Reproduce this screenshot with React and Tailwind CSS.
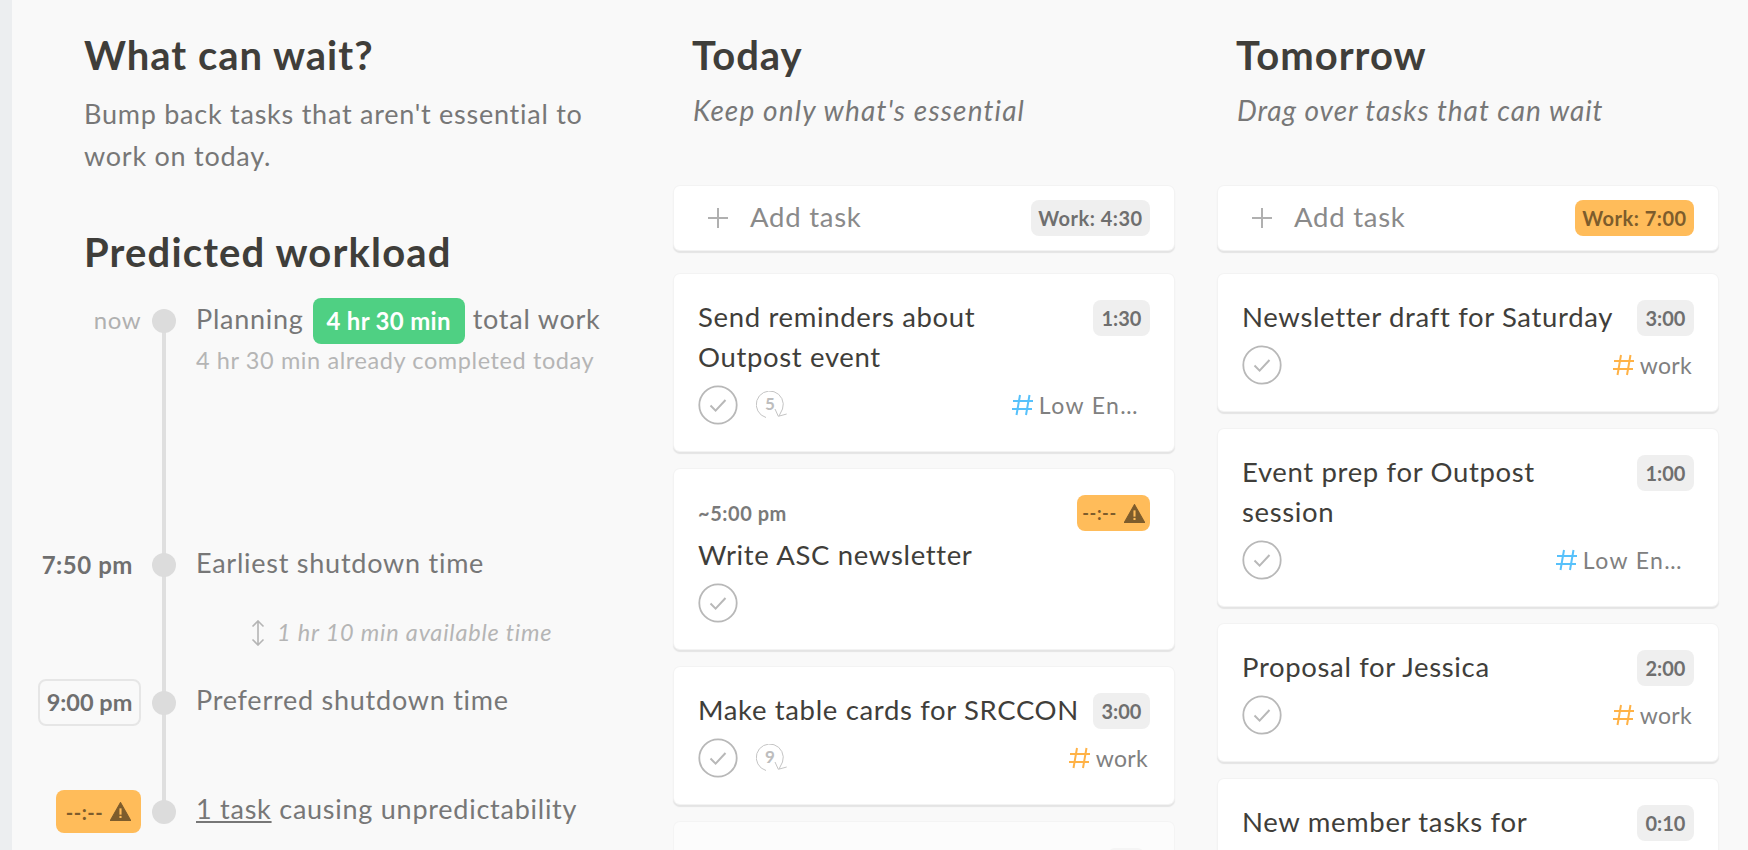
import React from "react";

const Check = () => (
  <svg width="40" height="40" viewBox="0 0 40 40" className="block shrink-0" fill="none">
    <circle cx="20" cy="20" r="18.7" stroke="#b8b8b8" strokeWidth="1.8" />
    <path d="M12.5 20.5 L17.6 25.6 L27.5 15" stroke="#b8b8b8" strokeWidth="2" />
  </svg>
);

const Repeat = ({ n }) => (
  <span className="relative ml-[18px] block h-[28px] w-[31px] shrink-0">
    <svg width="31" height="28" viewBox="0 0 31 28" className="absolute left-0 top-0" fill="none">
      <path d="M10 26.5 A13.5 13.5 0 1 1 26.5 18 L23 25" stroke="#c4c4c4" strokeWidth="1" />
      <path d="M19 18 L22.3 25.3 L30.7 23" stroke="#c4c4c4" strokeWidth="1" />
    </svg>
    <span className="absolute left-0 top-[1px] w-[28px] text-center text-[17px] font-bold leading-[24px] text-[#bdbdbd]">{n}</span>
  </span>
);

const Hash = ({ c }) => (
  <svg width="22" height="24" viewBox="0 0 22 24" fill="none" stroke={c} strokeWidth="2" className="shrink-0">
    <path d="M8 2 L4.5 22 M17.5 2 L14 22 M1 8 H21 M0 16 H20" />
  </svg>
);

const Tag = ({ type }) =>
  type === "low" ? (
    <span className="ml-auto mr-[11px] flex items-center gap-[5px] text-[23px] tracking-[1.4px] text-[#808080]">
      <Hash c="#57c1fb" />
      Low En…
    </span>
  ) : (
    <span className="ml-auto mr-[2px] flex items-center gap-[5px] text-[23px] tracking-[0.3px] text-[#808080]">
      <Hash c="#ffb246" />
      work
    </span>
  );

const Warn = ({ className = "", small }) => (
  <span className={`flex items-center justify-center gap-[7px] rounded-[8px] bg-[#ffbc5a] text-[#7d5c2c] ${className}`}>
    <span className={small ? "text-[18px] font-bold leading-none tracking-[0.6px]" : "text-[20px] font-bold leading-none tracking-[0.5px]"}>--:--</span>
    <svg width="21" height="19" viewBox="0 0 20 18" className="shrink-0">
      <path d="M10 0.5 L19.7 17.5 H0.3 Z" fill="#7d5c2c" stroke="#7d5c2c" strokeLinejoin="round" />
      <rect x="9" y="6" width="2" height="6" fill="#ffbc5a" />
      <rect x="9" y="13.2" width="2" height="2" fill="#ffbc5a" />
    </svg>
  </span>
);

const Time = ({ children }) => (
  <span className="mt-[3px] flex h-9 w-[57px] shrink-0 items-center justify-center rounded-[8px] bg-[#efefef] text-[20px] font-bold text-[#6f6f6f]">
    {children}
  </span>
);

const Card = ({ title, time, tag, repeat, pre, noMeta }) => (
  <div className="rounded-[6px] bg-white pb-[26px] pl-6 pr-6 pt-[23px] shadow-[0_0_0_1px_#f3f3f3,0_2px_1px_1px_#e4e4e4]">
    {pre && (
      <div className="mb-[4px] flex h-[39px] items-start justify-between pt-[3px]">
        <span className="text-[20px] font-bold leading-[36px] tracking-[0.55px] text-[#7a7a7a]">{pre}</span>
        <Warn small className="h-9 w-[73px]" />
      </div>
    )}
    <div className="flex items-start justify-between">
      <div className="w-[385px] text-[27.5px] leading-[40px] tracking-[0.65px] text-[#3f3e3a]">{title}</div>
      {time && <Time>{time}</Time>}
    </div>
    {!noMeta && (
      <div className="mt-[8px] flex items-center">
        <Check />
        {repeat && <Repeat n={repeat} />}
        {tag && <Tag type={tag} />}
      </div>
    )}
  </div>
);

const AddTask = ({ work, warn }) => (
  <div className="mb-[24px] flex h-16 items-center rounded-[6px] bg-white pl-[34px] pr-6 shadow-[0_0_0_1px_#f3f3f3,0_2px_1px_1px_#e4e4e4]">
    <svg width="20" height="20" viewBox="0 0 20 20" stroke="#b0b0b0" strokeWidth="2" className="mr-[22px] shrink-0">
      <path d="M10 0 V20 M0 10 H20" />
    </svg>
    <span className="pb-[2px] text-[27.5px] tracking-[0.75px] text-[#8a8a8a]">Add task</span>
    <span
      className={
        warn
          ? "ml-auto flex h-9 w-[119px] items-center justify-center rounded-[8px] bg-[#ffbc5a] text-[20px] font-bold tracking-[0.5px] text-[#7d5c2c]"
          : "ml-auto flex h-9 w-[119px] items-center justify-center rounded-[8px] bg-[#efefef] text-[20px] font-bold tracking-[0.5px] text-[#6f6f6f]"
      }
    >
      {work}
    </span>
  </div>
);

const Dot = () => <span className="relative z-10 ml-[11px] mr-5 block h-6 w-6 shrink-0 rounded-full bg-[#dcdcdc]" />;

const Faded = () => (
  <div className="flex h-[60px] justify-end rounded-[6px] bg-[#fcfcfc] pr-[29px] pt-[26px] shadow-[0_0_0_1px_#f4f4f4]">
    <span className="h-9 w-[38px] rounded-[8px] bg-[#f5f5f5]" />
  </div>
);

const Body = "pb-1 text-[27px] tracking-[0.75px] text-[#777777]";

export default function App() {
  return (
    <div className="flex h-[850px] w-[1748px] overflow-hidden bg-[#f9f9f9] font-['Lato',sans-serif]">
      <div className="w-3 shrink-0 bg-[#eceef0]" />
      <div className="w-[662px] shrink-0 pl-[72px] pt-[30px]">
        <h1 className="text-[40px] font-bold leading-[50px] tracking-[1px] text-[#3f3e3a]">What can wait?</h1>
        <p className="mt-[13px] w-[530px] text-[27px] leading-[42px] tracking-[0.75px] text-[#777777]">
          Bump back tasks that aren't essential to work on today.
        </p>
        <h2 className="mt-[50px] text-[40px] font-bold leading-[50px] tracking-[1.15px] text-[#3f3e3a]">Predicted workload</h2>
        <div className="relative -ml-[46px] mt-[21px]">
          <div className="absolute left-[124px] top-[22px] h-[491px] w-[4px] bg-[#dfdfdf]" />
          <div className="flex h-[46px] items-center">
            <span className="w-[103px] pb-[2px] text-right text-[24px] tracking-[0.5px] text-[#b0b0b0]">now</span>
            <Dot />
            <span className={Body}>Planning</span>
            <span className="ml-[9px] mr-2 flex h-[46px] w-[152px] shrink-0 items-center justify-center rounded-[8px] bg-[#4fd083] text-[24px] font-bold tracking-[0.3px] text-white">4 hr 30 min</span>
            <span className={Body}>total work</span>
          </div>
          <div className="pl-[158px] text-[23.5px] leading-[32px] tracking-[0.6px] text-[#b5b5b5]">4 hr 30 min already completed today</div>
          <div className="mt-[166px] flex h-[46px] items-center">
            <span className="w-[95px] text-right text-[24px] font-bold tracking-[0.55px] text-[#6f6f6f]">7:50 pm</span>
            <span className="w-2 shrink-0" />
            <Dot />
            <span className={Body}>Earliest shutdown time</span>
          </div>
          <div className="mt-[29px] flex h-[32px] items-center pl-[213px] text-[23.5px] italic tracking-[0.8px] text-[#b5b5b5]">
            <svg width="14" height="26" viewBox="0 0 14 26" fill="none" stroke="#b5b5b5" strokeWidth="1.6" className="mr-[12px] shrink-0">
              <path d="M7 1 V25 M1.5 6.5 L7 1 L12.5 6.5 M1.5 19.5 L7 25 L12.5 19.5" />
            </svg>
            1 hr 10 min available time
          </div>
          <div className="mt-[30px] flex h-[47px] items-center">
            <span className="flex h-[47px] w-[103px] items-center justify-center rounded-[8px] border-2 border-[#e6e6e6] text-[23.5px] font-bold text-[#6f6f6f]">9:00 pm</span>
            <Dot />
            <span className={Body}>Preferred shutdown time</span>
          </div>
          <div className="mt-[64px] flex h-[43px] items-center">
            <span className="ml-[18px]"><Warn className="h-[43px] w-[85px]" /></span>
            <Dot />
            <span className={Body}><span className="underline">1 task</span> causing unpredictability</span>
          </div>
        </div>
      </div>
      <div className="w-[500px] shrink-0">
        <div className="h-[186px] pl-[18px] pt-[30px]">
          <div className="text-[40px] font-bold leading-[50px] tracking-[1px] text-[#3f3e3a]">Today</div>
          <div className="mt-[9px] pl-[1px] text-[28px] italic leading-[42px] tracking-[1.15px] text-[#777777]">Keep only what's essential</div>
        </div>
        <AddTask work="Work: 4:30" />
        <div className="flex flex-col gap-[18px]">
          <Card title="Send reminders about Outpost event" time="1:30" tag="low" repeat="5" />
          <Card title="Write ASC newsletter" pre="~5:00 pm" />
          <Card title="Make table cards for SRCCON" time="3:00" tag="work" repeat="9" />
          <Faded />
        </div>
      </div>
      <div className="ml-[44px] w-[500px] shrink-0">
        <div className="h-[186px] pl-[18px] pt-[30px]">
          <div className="text-[40px] font-bold leading-[50px] tracking-[1px] text-[#3f3e3a]">Tomorrow</div>
          <div className="mt-[9px] pl-[1px] text-[28px] italic leading-[42px] tracking-[0.95px] text-[#777777]">Drag over tasks that can wait</div>
        </div>
        <AddTask work="Work: 7:00" warn />
        <div className="flex flex-col gap-[18px]">
          <Card title="Newsletter draft for Saturday" time="3:00" tag="work" />
          <Card title={<>Event prep for Outpost<br />session</>} time="1:00" tag="low" />
          <Card title="Proposal for Jessica" time="2:00" tag="work" />
          <Card title="New member tasks for" time="0:10" noMeta />
        </div>
      </div>
    </div>
  );
}
